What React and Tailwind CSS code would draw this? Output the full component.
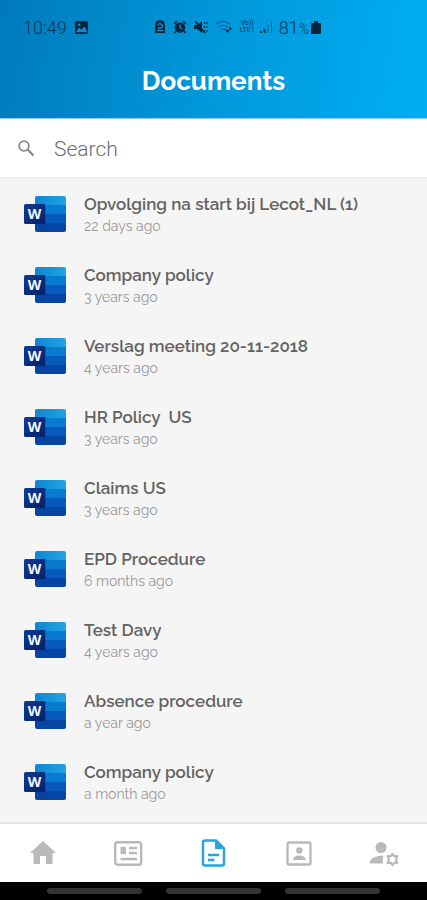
import React from "react";

const documents = [
  { title: "Opvolging na start bij Lecot_NL (1)", age: "22 days ago" },
  { title: "Company policy", age: "3 years ago" },
  { title: "Verslag meeting 20-11-2018", age: "4 years ago" },
  { title: "HR Policy  US", age: "3 years ago" },
  { title: "Claims US", age: "3 years ago" },
  { title: "EPD Procedure", age: "6 months ago" },
  { title: "Test Davy", age: "4 years ago" },
  { title: "Absence procedure", age: "a year ago" },
  { title: "Company policy", age: "a month ago" },
];

function WordIcon() {
  return (
    <svg className="h-[38px] w-[42px] shrink-0" viewBox="0 0 42 38" aria-hidden="true">
      <defs>
        <clipPath id="sheet">
          <rect x="11" y="1" width="31" height="36" rx="2" />
        </clipPath>
        <linearGradient id="tile" x1="0" y1="0" x2="1" y2="1">
          <stop offset="0" stopColor="#0b3c94" />
          <stop offset="1" stopColor="#04206a" />
        </linearGradient>
        <linearGradient id="band" x1="0" y1="0" x2="1" y2="0">
          <stop offset="0" stopColor="#0f86cf" />
          <stop offset="1" stopColor="#20a4e4" />
        </linearGradient>
      </defs>
      <g clipPath="url(#sheet)">
        <rect x="11" y="1" width="31" height="9" fill="url(#band)" />
        <rect x="11" y="10" width="31" height="9" fill="#087bd0" />
        <rect x="11" y="19" width="31" height="9" fill="#0759bb" />
        <rect x="11" y="28" width="31" height="9" fill="#0745a5" />
        <path d="M11 9h11v21H11z" fill="#04337f" opacity=".3" />
      </g>
      <rect x="0" y="9" width="21" height="20" rx="1.500" fill="url(#tile)" />
      <text x="10.500" y="24" textAnchor="middle" className="fill-[#f2f6ff] font-['Open_Sans',sans-serif] text-[14px] font-bold">
        W
      </text>
    </svg>
  );
}

function StatusBar() {
  return (
    <div className="flex h-[54px] items-center pl-[23px] font-['Roboto',sans-serif] text-[18px] font-light text-[#07344f]">
      <span>10:49</span>
      <svg className="ml-2 h-[13px] w-[13px]" viewBox="0 0 14 14" aria-hidden="true">
        <rect width="14" height="14" rx="2" fill="#07263c" />
        <path d="M1.500 11l3-4 2.500 2.500L10 6l2.500 4v2h-11z" fill="#168aca" />
        <circle cx="4.500" cy="4" r="1.300" fill="#168aca" />
      </svg>
      <div className="ml-[66px] flex items-center gap-[7px]">
        <svg className="h-[14px] w-[12px]" viewBox="0 0 12 14" aria-hidden="true">
          <path d="M2 1.500Q6-1 10 1.500L11 6v7H1V6z" fill="#07263c" />
          <path d="M4 5q2-3 4 0T4 8m-1 2.500h6" fill="none" stroke="#128fd0" strokeWidth="1.500" />
        </svg>
        <svg className="h-[14px] w-[14px]" viewBox="0 0 14 14" aria-hidden="true">
          <circle cx="7" cy="7.500" r="5.200" fill="#07263c" />
          <path d="M1 4l3-3m6 0l3 3M3 11l-1.500 2M11 11l1.500 2" stroke="#07263c" strokeWidth="1.700" />
          <path d="M7 4.500v3.200l2.300 1" fill="none" stroke="#159bdd" strokeWidth="1.200" />
        </svg>
        <svg className="h-[14px] w-[14px]" viewBox="0 0 14 14" aria-hidden="true">
          <path d="M0 5h3l5-4v12L3 9H0z" fill="#07263c" />
          <path d="M1 1l10 12" stroke="#07263c" strokeWidth="1.600" />
          <path d="M10.500 2v10M13 2v10" stroke="#07344f" strokeWidth="1.200" strokeDasharray="2 2" />
        </svg>
        <svg className="h-[14px] w-[17px]" viewBox="0 0 17 14" fill="none" stroke="#0b5786" aria-hidden="true">
          <path d="M1 4q7-5 14 0M3.500 7q4.500-3.500 9 0M6 10q2.500-2 5 0" strokeWidth="1.200" />
          <path d="M10.500 10h4l-2 3zM13.500 9.500l1.700-3 1.700 3z" fill="#07263c" stroke="none" />
        </svg>
        <span className="flex w-[17px] flex-col text-center text-[7px] leading-[7px] font-normal">
          <span>Vo))</span>
          <span>LTE1</span>
        </span>
        <svg className="-ml-1 h-[14px] w-[14px]" viewBox="0 0 14 14" aria-hidden="true">
          <path d="M1 11h2v2H1zM4.500 9h2v4h-2z" fill="#07344f" />
          <path d="M8.500 5h1v8h-1zM12 1h1v12h-1z" fill="#0b5c8c" />
        </svg>
      </div>
      <span className="ml-[6px]">
        81<span className="text-[14px]">%</span>
      </span>
      <svg className="ml-[2px] h-[13px] w-[10px]" viewBox="0 0 10 13" aria-hidden="true">
        <path d="M3 0h4v2h2q1 0 1 1v9q0 1-1 1H1q-1 0-1-1V3q0-1 1-1h2z" fill="#07263c" />
      </svg>
    </div>
  );
}

const tabs = [
  {
    label: "Home",
    icon: <path d="M15 3L2 15h3.500v11H12v-8h6v8h6.500V15H28z" fill="currentColor" />,
  },
  {
    label: "News",
    icon: (
      <g fill="none" stroke="currentColor" strokeWidth="2.400">
        <rect x="2.200" y="4.200" width="26" height="22.500" rx="2.500" />
        <path d="M16 10h8M16 15h8M7.500 21h16.500" />
        <path d="M7.500 8.800h5.500v7.400H7.500z" fill="currentColor" stroke="none" />
      </g>
    ),
  },
  {
    label: "Documents",
    icon: (
      <g fill="none" stroke="currentColor" strokeWidth="2.500">
        <path d="M18 2.500H7Q5 2.500 5 4.500v21q0 2 2 2h17q2 0 2-2V10.500z" strokeLinejoin="round" />
        <path d="M17 2.500V11h9z" fill="currentColor" stroke="none" />
        <path d="M10 17h11M10 22h6.500" />
      </g>
    ),
  },
  {
    label: "Contacts",
    icon: (
      <g fill="currentColor">
        <rect x="3.500" y="4.500" width="23" height="22" rx="1.500" fill="none" stroke="currentColor" strokeWidth="2.300" />
        <circle cx="15.300" cy="12.500" r="3.200" />
        <path d="M9 22q0-4.500 6.300-4.500t6.300 4.500z" />
      </g>
    ),
  },
  {
    label: "Account settings",
    icon: (
      <g fill="currentColor">
        <circle cx="12" cy="9.500" r="5.500" />
        <path d="M1 25.500V23q2-5 13.500-5.500-1.500 4-.2 8z" />
        <g transform="translate(23.500 21.500)">
          <path
            fill="none"
            stroke="currentColor"
            strokeWidth="2.200"
            strokeLinejoin="round"
            d="M0-5.500l1.800 2.400 3-.3L3.600 0l1.200 3.400-3-.3L0 5.500l-1.800-2.400-3 .3L-3.600 0l-1.200-3.400 3 .3z"
          />
        </g>
      </g>
    ),
  },
];

export default function App() {
  return (
    <div className="flex min-h-screen flex-col bg-[#f5f5f5] font-['Raleway','Lato',sans-serif]">
      <header className="h-[119px] border-b border-[#8ccbf2] bg-linear-[100deg] from-[#007abc] via-[#0098db] to-[#00aef2]">
        <StatusBar />
        <h1 className="text-center text-[26px] leading-[54px] font-bold text-white">Documents</h1>
      </header>

      <label className="flex h-[60px] items-center border-b-2 border-[#ececec] bg-white pl-[18px]">
        <svg className="h-4 w-4 shrink-0" viewBox="0 0 16 16" fill="none" stroke="#85878a" aria-hidden="true">
          <circle cx="6" cy="6" r="4.800" strokeWidth="1.800" />
          <path d="M9.500 9.500l6 6" strokeWidth="2.200" />
        </svg>
        <input
          type="search"
          aria-label="Search documents"
          placeholder="Search"
          className="ml-5 min-w-0 flex-1 bg-transparent pt-[3px] font-['Roboto',sans-serif] text-[21px] font-light text-[#5c6066] outline-none placeholder:text-[#6a6e73]"
        />
      </label>

      <main className="flex-1">
        <ul>
          {documents.map((doc, i) => (
            <li key={i}>
              <a href="#" className="flex h-[71px] items-start gap-[18px] pt-4 pr-4 pl-6">
                <WordIcon />
                <span className="flex min-w-0 flex-col">
                  <span className="text-[17px] leading-[19px] font-semibold whitespace-pre text-[#636363] oldstyle-nums">{doc.title}</span>
                  <span className="text-[14px] leading-[24px] text-[#999999] oldstyle-nums">{doc.age}</span>
                </span>
              </a>
            </li>
          ))}
        </ul>
      </main>

      <nav className="grid h-[60px] grid-cols-5 border-t-2 border-[#e6e6e6] bg-white">
        {tabs.map((tab) => (
          <button
            key={tab.label}
            type="button"
            aria-label={tab.label}
            className={
              tab.label === "Documents"
                ? "flex items-center justify-center text-[#27a5dc]"
                : "flex items-center justify-center text-[#b9b9b9]"
            }
          >
            <svg className="h-[30px] w-[30px]" viewBox="0 0 30 30" aria-hidden="true">
              {tab.icon}
            </svg>
          </button>
        ))}
      </nav>

      <div className="flex h-[18px] items-center justify-center gap-6 bg-black px-[47px]">
        <span className="h-[6px] flex-1 rounded-full bg-[#333333]" />
        <span className="h-[6px] flex-1 rounded-full bg-[#333333]" />
        <span className="h-[6px] flex-1 rounded-full bg-[#333333]" />
      </div>
    </div>
  );
}
